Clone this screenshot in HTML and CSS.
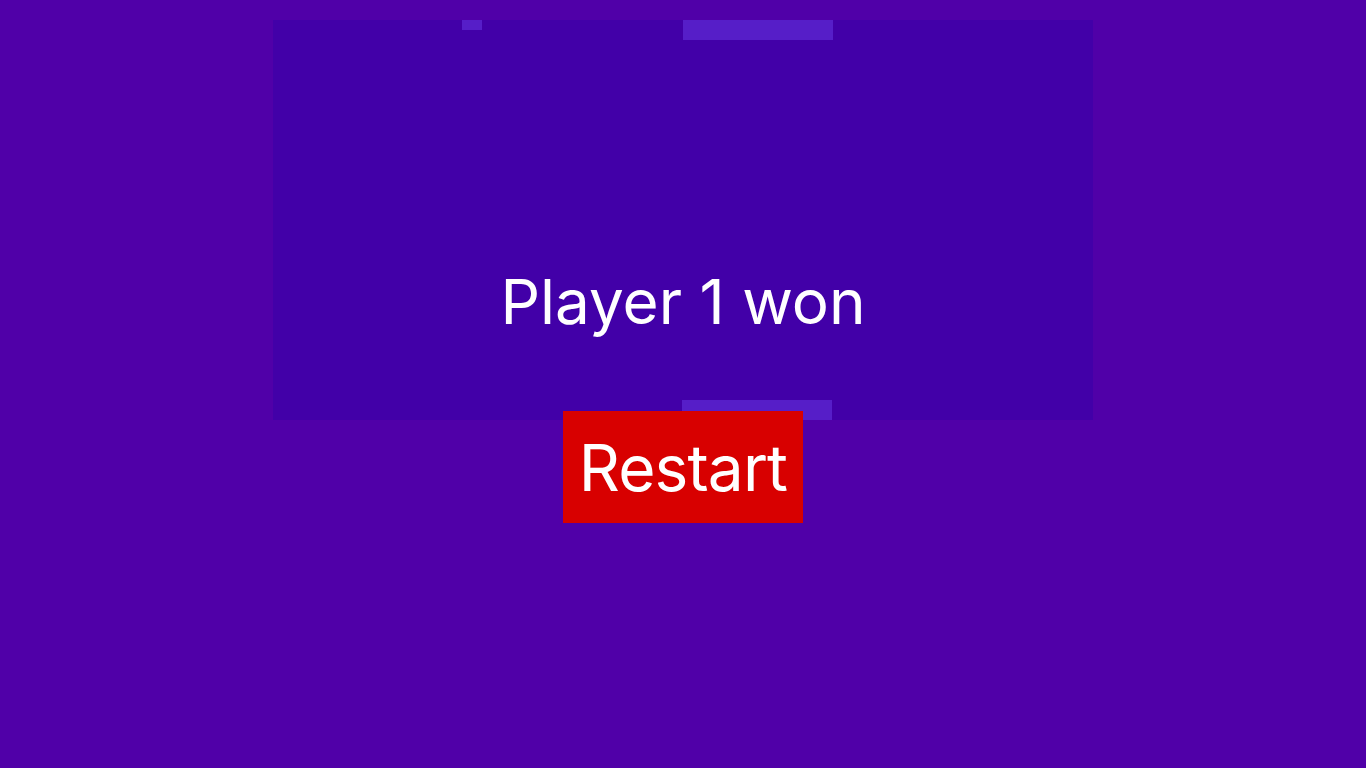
FILE: index.html
```html
<!DOCTYPE html>
<html lang="en">
<head>
<meta charset="utf-8">
<title>Pong</title>
<link rel="stylesheet" href="styles.css">
</head>
<body>
<main class="game">
  <div class="board">
    <div class="paddle paddle-top"></div>
    <div class="ball"></div>
    <div class="message">Player 1 won</div>
    <div class="paddle paddle-bottom"></div>
  </div>
  <button class="restart">Restart</button>
</main>
</body>
</html>
```
FILE: styles.css
```css
html, body {
  margin: 0;
  height: 100%;
}
body {
  background: #5000a8;
  font-family: Inter, "Noto Sans", sans-serif;
}
.game {
  display: flex;
  flex-direction: column;
  align-items: center;
  padding-top: 20px;
}
.board {
  position: relative;
  width: 820px;
  height: 400px;
  background: #4200a8;
  display: flex;
  flex-direction: column;
  justify-content: flex-end;
  align-items: center;
  padding-bottom: 81px;
  box-sizing: border-box;
}
.message {
  color: #ffffff;
  font-size: 62px;
  line-height: 75px;
  white-space: nowrap;
}
.paddle {
  position: absolute;
  width: 150px;
  height: 20px;
  background: #561ec8;
}
.paddle-top {
  top: 0;
  left: 410px;
}
.paddle-bottom {
  bottom: 0;
  left: 409px;
}
.ball {
  position: absolute;
  top: 0;
  left: 189px;
  width: 20px;
  height: 10px;
  background: #561ec8;
}
.restart {
  position: relative;
  z-index: 1;
  margin-top: -9px;
  width: 240px;
  height: 112px;
  border: none;
  padding: 0;
  background: #d80000;
  color: #ffffff;
  font-family: Inter, "Noto Sans", sans-serif;
  font-size: 64px;
  line-height: 77px;
  letter-spacing: -0.9px;
  cursor: pointer;
}
```
